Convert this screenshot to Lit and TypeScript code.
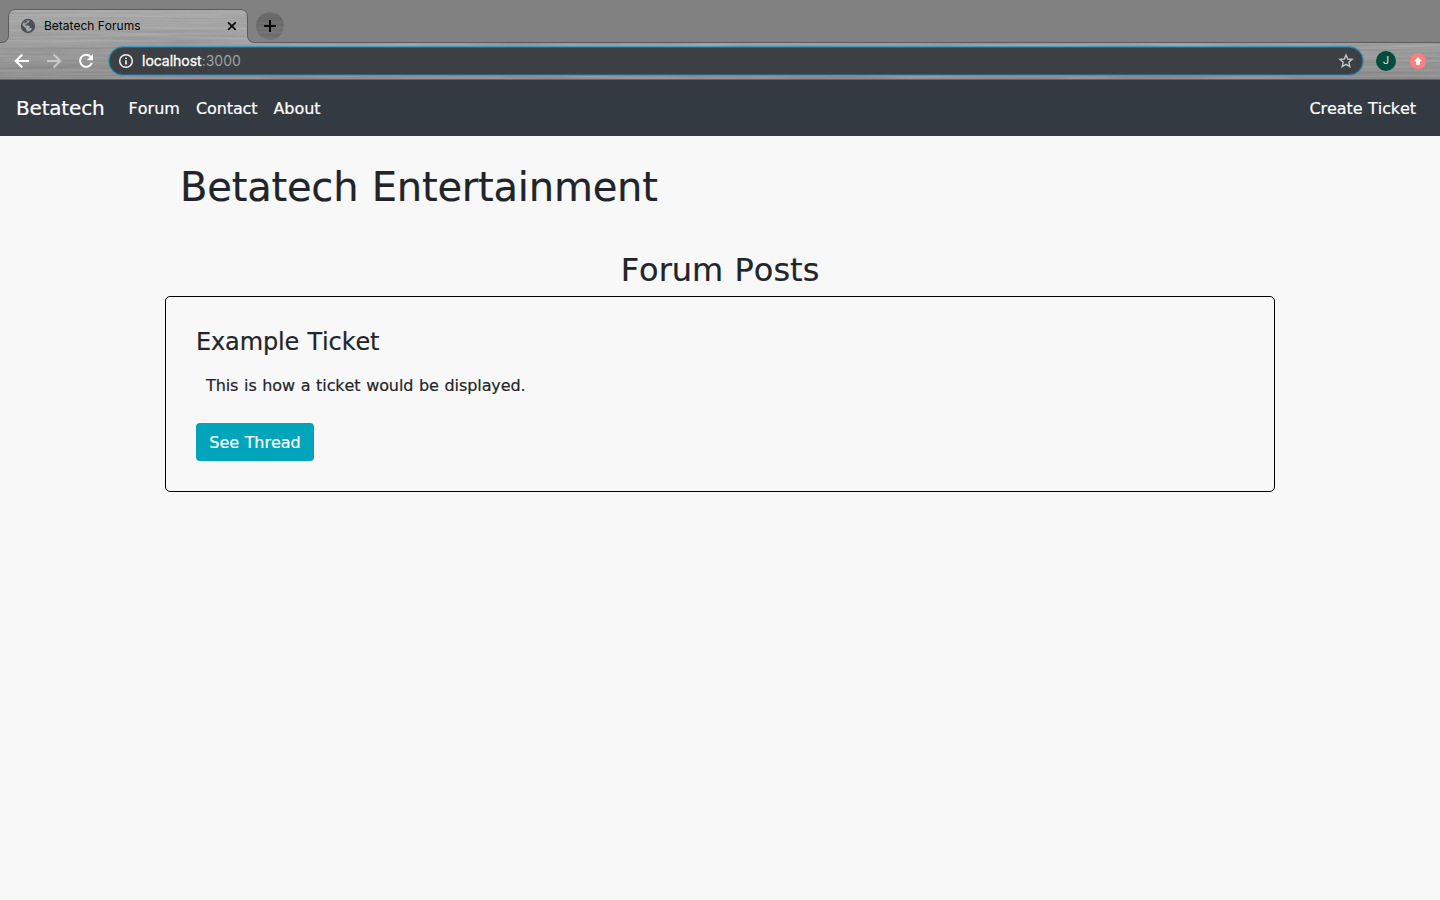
import { LitElement, html, css } from "lit";
import { customElement } from "lit/decorators.js";

@customElement("browser-chrome")
class BrowserChrome extends LitElement {
  static styles = css`
    :host {
      display: flex;
      flex-direction: column;
      position: relative;
      height: 80px;
      background: #818181;
      font-family: Inter, Roboto, "Liberation Sans", sans-serif;
      overflow: hidden;
    }
    svg { display: block; flex: none; }
    .metal { position: absolute; inset: 0; }
    .tabs { display: flex; position: relative; height: 43px; box-sizing: border-box; padding: 10px 0 0 20px; }
    .tab { display: flex; align-items: center; width: 220px; height: 32px; }
    .title { flex: 1; margin-left: 8px; font-size: 12px; line-height: 32px; letter-spacing: 0; color: #050505; }
    .close { margin-right: 2px; }
    .new { margin: 2px 0 0 16px; }
    .bar { display: flex; position: relative; height: 37px; align-items: center; box-sizing: border-box; padding: 0 12px 1px; }
    .tool { margin-right: 12px; }
    .omni {
      display: flex;
      align-items: center;
      box-sizing: border-box;
      width: 1256px;
      height: 30px;
      padding: 0 9px;
      border: 1px solid #4497c6;
      box-shadow: inset 0 0 0 1px #29658a;
      border-radius: 15px;
      background: #3c4043;
    }
    .url { flex: 1; margin-left: 8px; font-size: 14px; line-height: 26px; color: #9aa0a6; }
    .host { color: #fff; -webkit-text-stroke: 0.3px #fff; }
    .avatar {
      display: flex;
      align-items: center;
      justify-content: center;
      width: 20px;
      height: 20px;
      margin: 0 14px 0 12px;
      border-radius: 50%;
      background: #004d40;
      color: #d6e6e2;
      font-family: Roboto, sans-serif;
      font-size: 11px;
      line-height: 20px;
    }
  `;

  render() {
    return html`
      <svg class="metal" width="1440" height="80" viewBox="0 0 1440 80">
        <defs>
          <filter id="brushed" x="0" y="0" width="100%" height="100%" color-interpolation-filters="sRGB">
            <feTurbulence type="fractalNoise" baseFrequency="0.009 0.4" numOctaves="3" seed="8" />
            <feColorMatrix values="0.15 0 0 0 0.52  0.15 0 0 0 0.52  0.15 0 0 0 0.52  0 0 0 0 1" />
          </filter>
          <linearGradient id="shade" x1="0" y1="0" x2="0" y2="1">
            <stop offset="0" stop-color="#fff" stop-opacity=".2" />
            <stop offset=".5" stop-color="#fff" stop-opacity=".08" />
            <stop offset="1" stop-color="#000" stop-opacity=".05" />
          </linearGradient>
          <clipPath id="frame">
            <path d="M0 43H1440V80H0ZM0 42.500H1Q8.500 42.500 8.500 35V17Q8.500 9.500 16 9.500H240Q247.500 9.500 247.500 17V35Q247.500 42.500 255 42.500V44H0Z" />
          </clipPath>
          <clipPath id="plus"><circle cx="270" cy="26" r="14" /></clipPath>
        </defs>
        <g clip-path="url(#frame)">
          <rect width="1440" height="80" filter="url(#brushed)" />
          <rect width="1440" height="80" fill="url(#shade)" />
        </g>
        <g clip-path="url(#plus)">
          <rect width="1440" height="80" filter="url(#brushed)" />
          <rect width="1440" height="80" fill="#000" opacity=".27" />
        </g>
        <path d="M0 42.500H1Q8.500 42.500 8.500 35V17Q8.500 9.500 16 9.500H240Q247.500 9.500 247.500 17V35Q247.500 42.500 255 42.500H1440" fill="none" stroke="#5b5b5b" />
        <path d="M0 79.500H1440" stroke="#626364" />
      </svg>
      <div class="tabs">
        <div class="tab">
          <svg width="16" height="16" viewBox="0 0 16 16">
            <circle cx="8" cy="8" r="7.200" fill="#4d5156" />
            <path d="M9.300 2.400V3.300Q9.300 4.700 7.800 4.700H6.800V5.700Q6.800 6.500 6 6.500H5V7.500H8.600Q9.600 7.500 9.600 8.500V9.800H10.600Q11.800 9.800 12 11Q10.400 13.600 7.400 13.700V12.600Q6 12.500 6 11.200V10.500L2.400 7.100Q3.100 3.300 6.500 2.300Z" fill="#a6a6a6" transform="translate(0 .1)" />
            <path d="M2.400 7.500L5.700 10.700V11.600Q5.700 12.700 7 13.300Q2.400 12.500 2.400 7.500Z" fill="#4d5156" />
            <path d="M4.300 4L5.800 2.700H7.700L6.300 4.600L4.300 5.500Z" fill="#4d5156" />
          </svg>
          <span class="title">Betatech Forums</span>
          <svg class="close" width="12" height="12" viewBox="0 0 12 12">
            <path d="M2.200 2.200L9.800 9.800M9.800 2.200L2.200 9.800" transform="translate(-.1 .1)" stroke="#080808" stroke-width="1.700" />
          </svg>
        </div>
        <svg class="new" width="28" height="28" viewBox="0 0 28 28">
          <path d="M14 8V20M8 14H20" stroke="#000" stroke-width="2" />
        </svg>
      </div>
      <div class="bar">
        <svg class="tool" width="20" height="20" viewBox="0 0 20 20">
          <path d="M17 10H4.200M10.300 3.500L3.800 10L10.300 16.500" fill="none" stroke="#fff" stroke-width="2" />
        </svg>
        <svg class="tool" width="20" height="20" viewBox="0 0 20 20">
          <path d="M3 10H15.800M9.700 3.500L16.200 10L9.700 16.500" fill="none" stroke="#c8cac9" stroke-width="2" />
        </svg>
        <svg class="tool" width="20" height="20" viewBox="0 0 20 20">
          <path d="M14.700 5.900A6 6 0 1 0 15.800 11.700" fill="none" stroke="#fff" stroke-width="2" />
          <path d="M17 2.900V9.200H10.700Z" fill="#fff" />
        </svg>
        <div class="omni">
          <svg width="16" height="16" viewBox="0 0 16 16">
            <circle cx="8" cy="8" r="6.300" fill="none" stroke="#f1f3f4" stroke-width="1.500" />
            <path d="M8 7.200V11.600M8 4.400V6" stroke="#f1f3f4" stroke-width="1.700" />
          </svg>
          <span class="url"><span class="host">localhost</span>:3000</span>
          <svg width="16" height="16" viewBox="0 0 16 16">
            <path d="M8 2L9.700 6L14.100 6.400L10.800 9.300L11.800 13.600L8 11.300L4.200 13.600L5.200 9.300L1.900 6.400L6.300 6Z" fill="none" stroke="#c3c6c9" stroke-width="1.400" />
          </svg>
        </div>
        <div class="avatar">J</div>
        <svg width="16" height="16" viewBox="0 0 16 16">
          <circle cx="8" cy="8" r="8" fill="#ff7f7f" />
          <path d="M8 3.900L12 8.200H10V11.700H6V8.200H4Z" fill="#fff" />
        </svg>
      </div>
    `;
  }
}

@customElement("site-nav")
class SiteNav extends LitElement {
  static styles = css`
    :host {
      display: flex;
      align-items: center;
      box-sizing: border-box;
      height: 56px;
      padding: 2px 24px 0 16px;
      background: #343a42;
      color: #fff;
      font-size: 16px;
      line-height: 24px;
      font-kerning: none;
      -webkit-text-stroke: 0.2px #fff;
    }
    .brand { width: 88px; margin-right: 24.6px; padding-bottom: 2px; font-size: 20px; line-height: 30px; letter-spacing: -0.0095em; }
    .links { display: flex; flex: 1; gap: 16px; }
    .contact { letter-spacing: -0.006em; }
    .about { letter-spacing: -0.003em; }
    .create { letter-spacing: -0.005em; word-spacing: 0.038em; }
  `;

  render() {
    return html`
      <span class="brand">Betatech</span>
      <div class="links">
        <span>Forum</span>
        <span class="contact">Contact</span>
        <span class="about">About</span>
      </div>
      <span class="create">Create Ticket</span>
    `;
  }
}

@customElement("app-root")
class AppRoot extends LitElement {
  static styles = css`
    :host {
      display: block;
      height: 900px;
      background: #f8f8f8;
      color: #212529;
      font-family: "DejaVu Sans", Verdana, sans-serif;
      font-size: 16px;
      line-height: 24px;
      font-kerning: none;
      overflow: hidden;
    }
    main { width: 1110px; margin: 0 auto; padding-top: 27px; }
    h1, h2, h3, p { margin: 0; font-weight: 400; -webkit-text-stroke: 0.2px #212529; }
    h1 { padding-left: 15px; font-size: 40px; line-height: 48px; letter-spacing: -0.005em; word-spacing: 0.022em; }
    h2 { margin-top: 40px; font-size: 32px; line-height: 38px; text-align: center; word-spacing: 0.034em; }
    .card {
      box-sizing: border-box;
      height: 196px;
      margin-top: 7px;
      padding: 31px 30px 29px;
      border: 1px solid #000;
      border-radius: 5px;
    }
    h3 { font-size: 24px; line-height: 29px; letter-spacing: -0.006em; word-spacing: 0.04em; }
    p { padding: 17px 10px 0; letter-spacing: -0.005em; word-spacing: 0.04em; }
    button {
      display: block;
      width: 118px;
      height: 38px;
      margin-top: 25px;
      padding: 2px 0 0;
      border: 0;
      border-radius: 4px;
      background: #00a5bb;
      color: #fff;
      font: inherit;
      font-kerning: none;
      letter-spacing: -0.003em;
      word-spacing: 0.034em;
      -webkit-text-stroke: 0.2px #fff;
    }
  `;

  render() {
    return html`
      <browser-chrome></browser-chrome>
      <site-nav></site-nav>
      <main>
        <h1>Betatech Entertainment</h1>
        <h2>Forum Posts</h2>
        <section class="card">
          <h3>Example Ticket</h3>
          <p>This is how a ticket would be displayed.</p>
          <button>See Thread</button>
        </section>
      </main>
    `;
  }
}
